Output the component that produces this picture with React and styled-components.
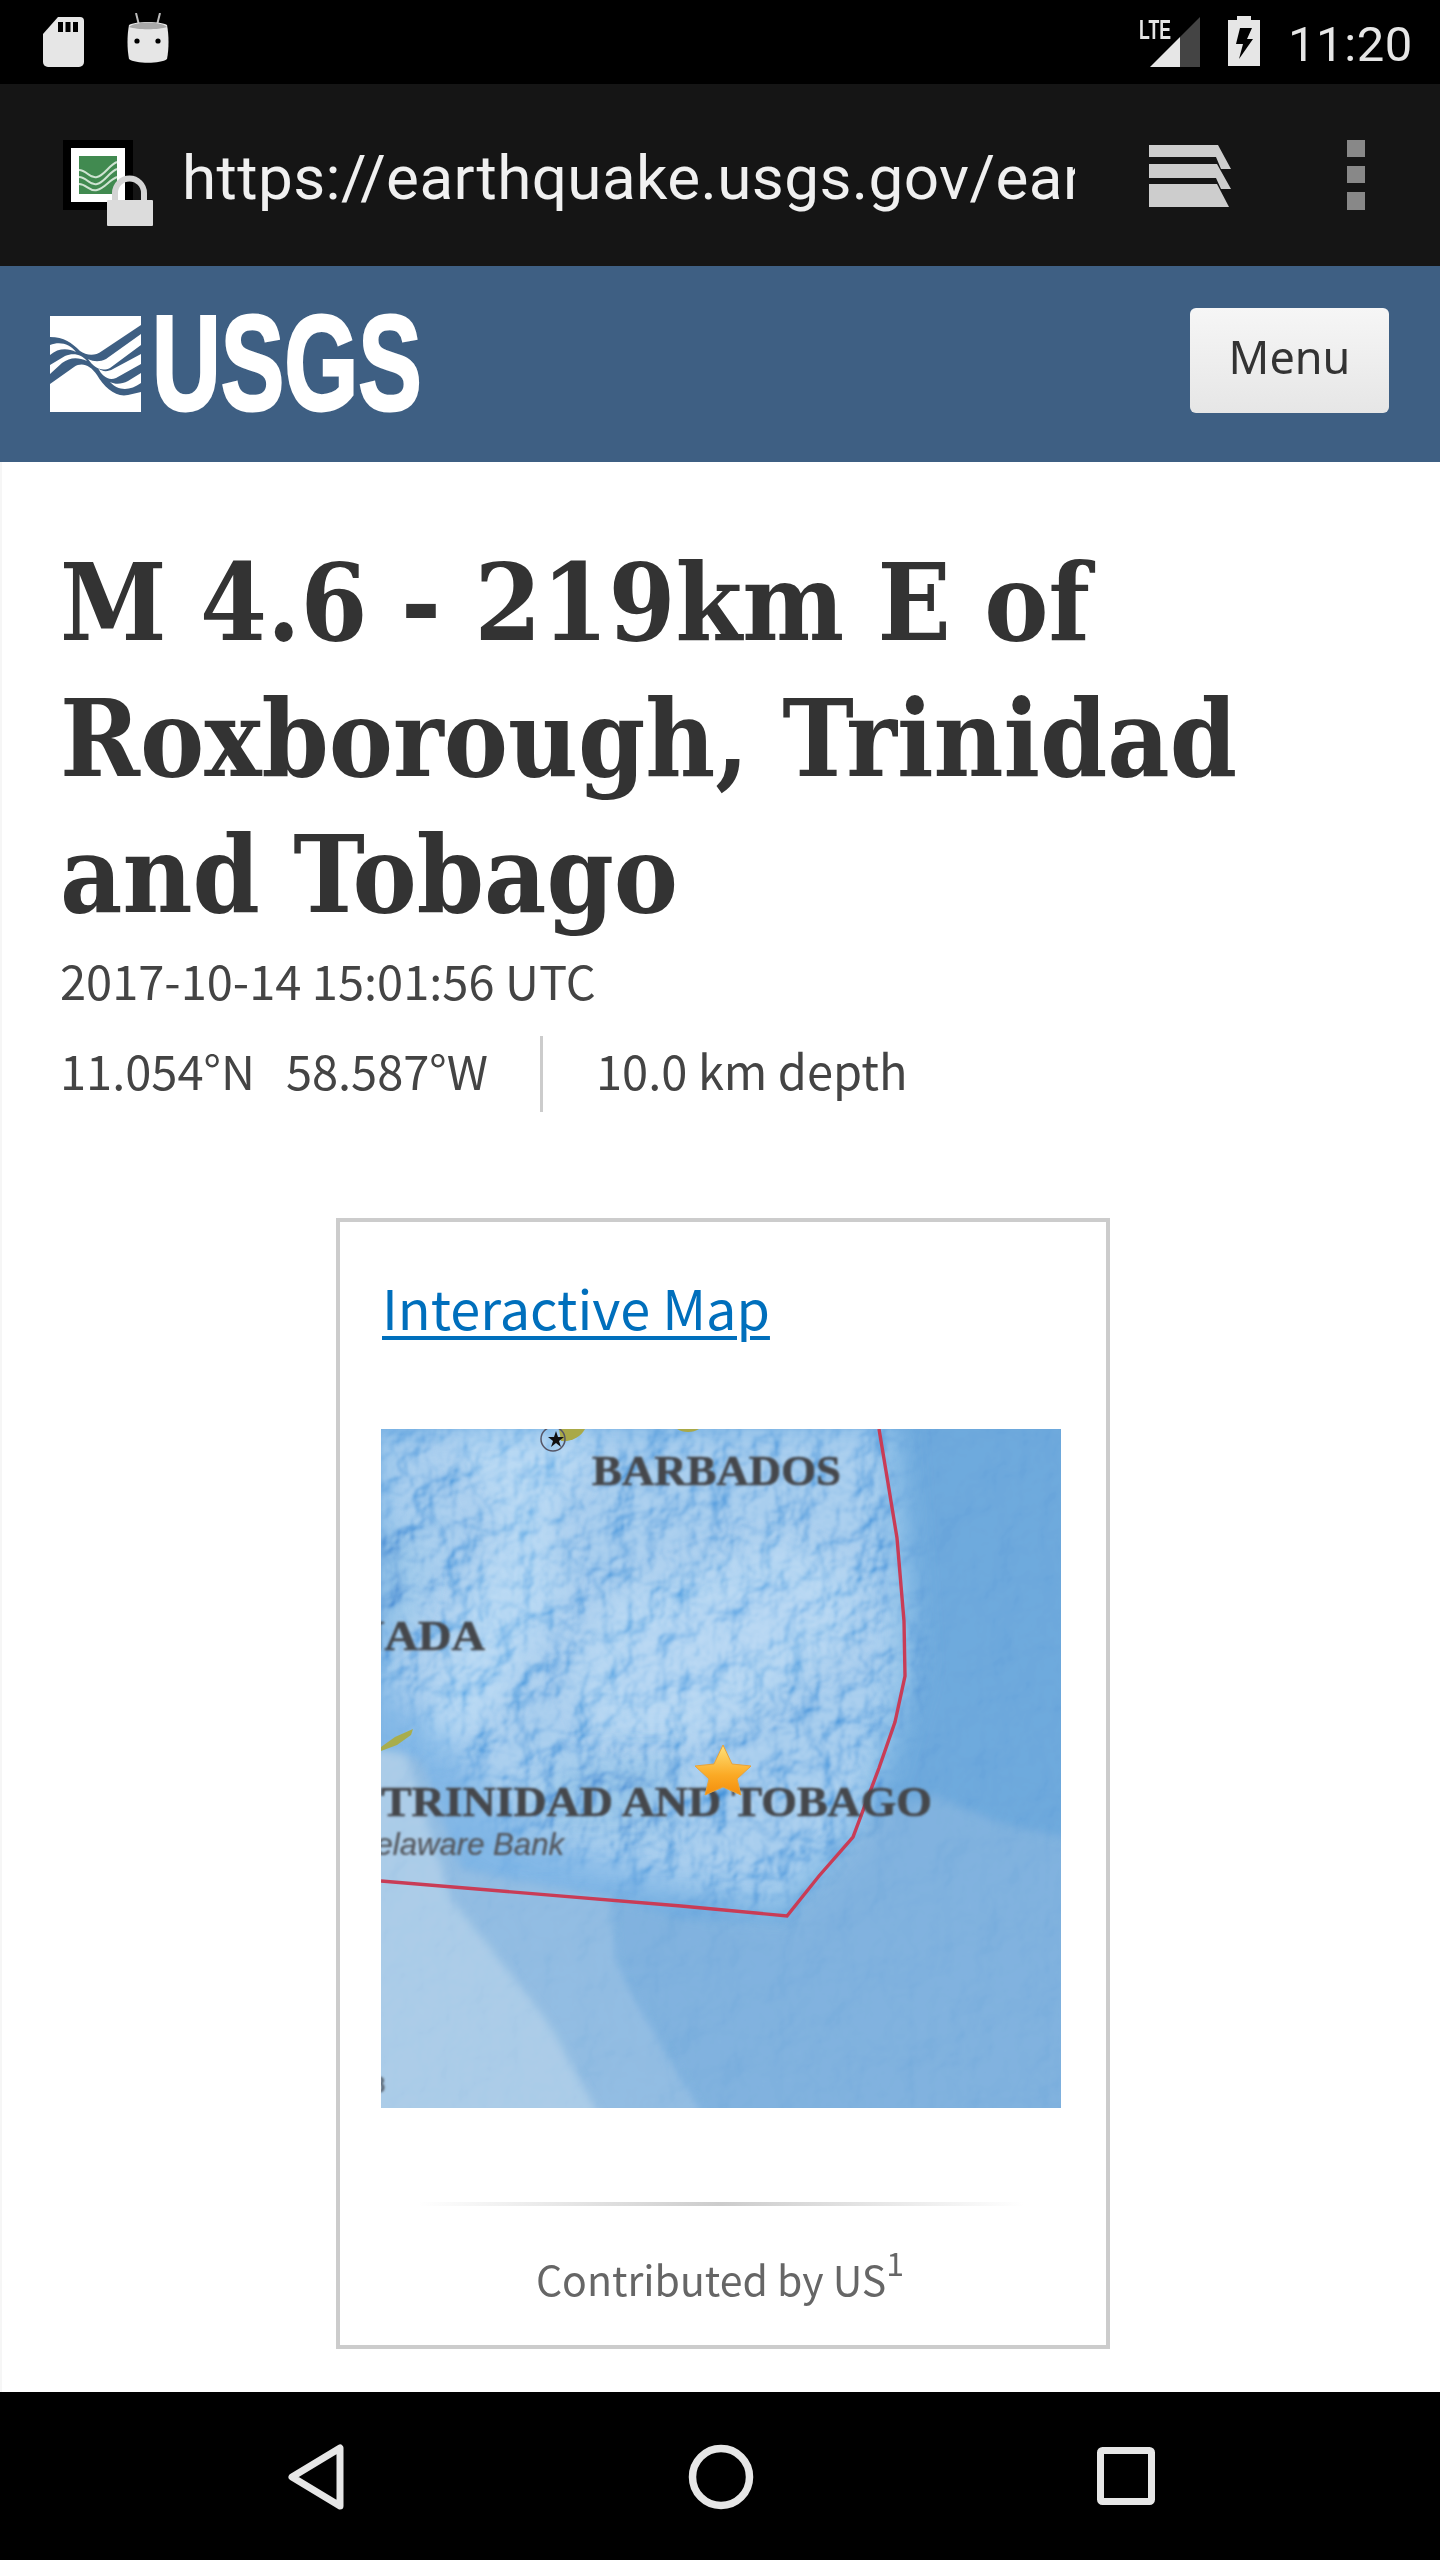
import React from 'react'
import styled, { createGlobalStyle } from 'styled-components'

const GlobalStyle = createGlobalStyle`
  html, body { margin: 0; padding: 0; background: #000; }
  * { box-sizing: border-box; }
`

const Phone = styled.div`
  width: 1440px;
  height: 2560px;
  display: flex;
  flex-direction: column;
  overflow: hidden;
  background: #000;
`

const StatusBar = styled.div`
  height: 84px;
  flex: none;
  background: #000;
  display: flex;
  align-items: flex-start;
  padding: 14px 27px 0 43px;
`
const StatusLeft = styled.div`
  display: flex;
  align-items: flex-start;
  gap: 43px;
  padding-top: 3px;
`
const StatusRight = styled.div`
  margin-left: auto;
  display: flex;
  align-items: flex-start;
`
const SignalIcon = styled.svg`
  display: block;
  margin-top: 3px;
`
const BatteryIcon = styled.svg`
  display: block;
  margin: 2px 28px 0 28px;
`
const Clock = styled.span`
  margin-top: 3px;
  font-family: Roboto, sans-serif;
  font-size: 49px;
  line-height: 56px;
  color: #e6e6e6;
  letter-spacing: 0.6px;
`

const Toolbar = styled.div`
  height: 182px;
  flex: none;
  background: #151515;
  display: flex;
  align-items: flex-start;
  padding: 56px 0 0 63px;
`
const UrlText = styled.div`
  width: 893px;
  margin: 6px 0 0 28px;
  height: 72px;
  overflow: hidden;
  white-space: nowrap;
  font-family: Roboto, sans-serif;
  font-size: 62px;
  line-height: 64px;
  letter-spacing: 0.4px;
  color: #f0f0f0;
`
const TabsIcon = styled.svg`
  display: block;
  margin: 5px 0 0 74px;
`
const MoreIcon = styled.svg`
  display: block;
  margin-left: 116px;
`

const SiteHeader = styled.header`
  height: 196px;
  flex: none;
  background: #3e5f83;
  display: flex;
  align-items: flex-start;
  padding: 42px 51px 0 50px;
`
const WaveMark = styled.svg`
  display: block;
  flex: none;
  margin-top: 8px;
`
const Wordmark = styled.span`
  width: 262px;
  margin: 1px 0 0 11px;
  display: block;
  font-family: "Liberation Sans", Arial, sans-serif;
  font-weight: 700;
  font-size: 136px;
  line-height: 108px;
  color: #fff;
  white-space: nowrap;
  transform: scaleX(0.7);
  transform-origin: 0 50%;
  -webkit-text-stroke: 3px #fff;
`
const MenuButton = styled.button`
  margin-left: auto;
  width: 199px;
  height: 105px;
  border: 0;
  border-radius: 6px;
  background: linear-gradient(#f6f6f6, #e6e6e6);
  font-family: "Noto Sans", sans-serif;
  font-size: 45px;
  color: #333;
  padding: 0 0 8px;
`

const Main = styled.main`
  flex: 1;
  min-height: 0;
  background: #fff;
  padding: 0 0 0 60px;
  border-left: 2px solid #f6f6f6;
  overflow: hidden;
`
const Title = styled.h1`
  margin: 73px 0 0 -2px;
  width: 1260px;
  font-family: "DejaVu Serif Condensed", "DejaVu Serif", serif;
  font-weight: 700;
  font-size: 107px;
  line-height: 136px;
  color: #333;
`
const MetaLine = styled.div`
  margin: 5px 0 0 -2px;
  font-family: "Noto Sans CJK SC", sans-serif;
  font-size: 47px;
  line-height: 64px;
  color: #444;
`
const MetaRow = styled.div`
  margin: 24px 0 0 -2px;
  height: 76px;
  display: flex;
  align-items: flex-start;
  font-family: "Noto Sans CJK SC", sans-serif;
  font-size: 47px;
  line-height: 68px;
  color: #444;
`
const Coord = styled.span`
  margin-right: 31px;
`
const Depth = styled.span`
  margin-left: 21px;
  padding-left: 53px;
  height: 76px;
  border-left: 3px solid #ccc;
`

const Card = styled.section`
  width: 774px;
  height: 1131px;
  margin: 106px 0 0 274px;
  border: 4px solid #ccc;
  padding: 46px 0 0 41px;
`
const MapLink = styled.a`
  display: block;
  height: 161px;
  margin-left: 1px;
  font-family: "Noto Sans CJK SC", sans-serif;
  font-size: 54px;
  line-height: 78px;
  color: #006fbc;
  text-decoration: underline;
  text-decoration-thickness: 4px;
  text-underline-offset: 6px;
`
const MapImage = styled.svg`
  display: block;
`
const Rule = styled.div`
  width: 606px;
  height: 4px;
  margin: 94px 0 0 37px;
  background: linear-gradient(90deg, rgba(204,204,204,0), #ccc 50%, rgba(204,204,204,0));
`
const Credit = styled.div`
  margin: 34px 0 0 -41px;
  width: 760px;
  text-align: center;
  font-family: "Noto Sans CJK SC", sans-serif;
  font-size: 41px;
  line-height: 76px;
  color: #666;
  sup { font-size: 32px; line-height: 0; vertical-align: 20px; }
`

const NavBar = styled.nav`
  height: 168px;
  flex: none;
  background: #000;
  display: flex;
  align-items: flex-start;
  padding: 52px 0 0 288px;
`
const NavIcon = styled.svg`
  display: block;
  margin-left: ${p => p.$gap || 0}px;
  margin-top: ${p => p.$top || 0}px;
`

function SdIcon() {
  return (
    <svg width="41" height="50" viewBox="0 0 41 50" style={{ display: 'block' }}>
      <path fill="#e6e6e6" d="M15 0H37a4 4 0 0 1 4 4V45a5 5 0 0 1-5 5H5a5 5 0 0 1-5-5V17Z" />
      <path fill="#000" d="M15 5h5v10h-5zM22.500 5h5v10h-5zM30 5h5v10h-5z" />
    </svg>
  )
}

function AndroidIcon() {
  return (
    <svg width="42" height="50" viewBox="0 0 42 50" style={{ display: 'block', marginTop: -4 }}>
      <path stroke="#bbb" strokeWidth="2" d="M9 0l3 12M33 0l-3 12" />
      <path fill="#e6e6e6" d="M2 12C8 8 34 8 40 12c2 10 2 24 0 34-6 5-32 5-38 0C0 36 0 22 2 12Z" />
      <path fill="#a8a8a8" d="M2 14C8 8 34 8 40 14c-8 3-30 3-38 0Z" />
      <circle cx="10" cy="28" r="2.600" fill="#000" />
      <circle cx="31" cy="28" r="2.600" fill="#000" />
    </svg>
  )
}

function Signal() {
  return (
    <SignalIcon width="61" height="50" viewBox="0 0 61 50">
      <polygon fill="#e6e6e6" points="11,50 41,20 41,50" />
      <polygon fill="#444" points="41,20 61,0 61,50 41,50" />
      <text x="0" y="22" fontFamily="Liberation Sans, sans-serif" fontWeight="700" fontSize="28" fill="#e6e6e6" textLength="32" lengthAdjust="spacingAndGlyphs">LTE</text>
    </SignalIcon>
  )
}

function Battery() {
  return (
    <BatteryIcon width="32" height="50" viewBox="0 0 32 50">
      <path fill="#e6e6e6" d="M9 0h14v4h9v46H0V4h9Z" />
      <path fill="#000" d="M12 12h12l-5 11h6L11 43l4-15H8Z" />
    </BatteryIcon>
  )
}

function Favicon() {
  return (
    <svg width="91" height="86" viewBox="0 0 91 86" style={{ display: 'block', flex: 'none' }}>
      <rect width="70" height="70" fill="#000" />
      <rect x="8" y="8" width="54" height="54" fill="#fff" />
      <rect x="16" y="16" width="38" height="38" fill="#418a50" />
      <path fill="none" stroke="#cfe3d2" strokeWidth="2" d="M16 30c8 0 10 9 18 7s12-12 20-15M16 37c8 0 10 9 18 7s12-12 20-15M16 44c8 0 10 8 18 6s12-10 20-13" />
      <path fill="none" stroke="#d4d4d4" strokeWidth="6" d="M52 62V53a14.500 14.500 0 0 1 29 0V62" />
      <rect x="44" y="60" width="46" height="26" rx="1" fill="#dcdcdc" />
    </svg>
  )
}

function WaveLogo() {
  return (
    <WaveMark width="91" height="96" viewBox="0 0 91 96">
      <path fill="#fff" d="M0 0H91V9L52 35C44 41 36 39 30 35C22 27 14 21 0 21Z" />
      <path fill="#fff" d="M0 29C10 25 20 28 26 36C18 32 8 32 0 39Z" />
      <path fill="#fff" d="M0 49L15 40C24 36 32 39 37 45C28 41 20 41 12 47L0 58Z" />
      <path fill="#fff" d="M38 43C44 46 50 46 56 43L91 18V29L60 52C52 56 44 52 38 43Z" />
      <path fill="#fff" d="M48 52C52 56 58 56 63 53L91 38V48L66 62C58 65 52 60 48 52Z" />
      <path fill="#fff" d="M60 66C66 69 72 68 78 65L91 57V67C80 75 68 75 60 66Z" />
      <path fill="#fff" d="M0 68L24 51C32 46 40 49 47 59C54 71 66 82 78 79L91 76V96H0Z" />
    </WaveMark>
  )
}

function MapPicture() {
  return (
    <MapImage width="680" height="679" viewBox="0 0 680 679">
      <defs>
        <filter id="relief" x="0" y="0" width="100%" height="100%">
          <feTurbulence type="fractalNoise" baseFrequency="0.024" numOctaves="5" seed="23" result="n" />
          <feDiffuseLighting in="n" surfaceScale="17" lightingColor="#fff" diffuseConstant="0.500">
            <feDistantLight azimuth="215" elevation="58" />
          </feDiffuseLighting>
          <feGaussianBlur stdDeviation="1.400" />
        </filter>
        <filter id="soft"><feGaussianBlur stdDeviation="16" /></filter>
        <filter id="softer"><feGaussianBlur stdDeviation="4" /></filter>
        <filter id="labelBlur"><feGaussianBlur stdDeviation="0.800" /></filter>
        <linearGradient id="star" x1="0" y1="0" x2="0" y2="1">
          <stop offset="0" stopColor="#ffe27a" />
          <stop offset="0.6" stopColor="#fbaa25" />
          <stop offset="1" stopColor="#f48e0c" />
        </linearGradient>
        <mask id="ridgeMask">
          <rect width="680" height="679" fill="#181818" />
          <path fill="#fff" filter="url(#soft)" d="M0 0H510L530 240L480 400L400 480L240 440L130 400L60 300L0 260Z" />
        </mask>
      </defs>
      <rect width="680" height="679" fill="#6ba7dc" />
      <path fill="#7eb5e6" filter="url(#soft)" d="M-20 -20H510L528 240L480 400L400 480L120 470L-20 400Z" />
      <path fill="#9fcdf2" opacity="0.7" filter="url(#soft)" d="M70 0H220L170 90L180 170L110 290L40 330L70 200L120 100Z" />
      <path fill="#9ccaf0" opacity="0.7" filter="url(#soft)" d="M230 170L400 110L480 150L470 210L320 310L220 310L190 250Z" />
      <path fill="#6aa3da" opacity="0.6" filter="url(#soft)" d="M-20 90L40 110L30 190L-20 230ZM170 340L290 330L290 400L150 400Z" />
      <path fill="#7db0de" filter="url(#softer)" d="M700 412L620 395L554 367L500 380L445 450L406 495L300 490L232 470L236 530L256 572L332 700H700Z" />
      <path fill="#8fbbe2" filter="url(#softer)" d="M-20 320L40 330L80 440L232 470L236 530L256 572L332 700H-20Z" />
      <path fill="#a9cbe8" filter="url(#softer)" d="M-20 320L25 325L70 470L110 520L165 590L226 700H-20Z" />
      <rect width="680" height="679" filter="url(#relief)" mask="url(#ridgeMask)" style={{ mixBlendMode: 'overlay' }} opacity="0.8" />
      <polygon fill="#a8ad4c" points="0,318 14,308 32,300 30,306 16,316 0,322" />
      <path fill="#a9a948" d="M178 0H204C200 8 190 13 180 12Z" />
      <path fill="#a9a948" d="M296 0H318C312 4 302 4 296 0Z" />
      <circle cx="172" cy="10" r="12" fill="none" stroke="#556" strokeWidth="1.500" />
      <polygon fill="#111" points="175,2 177,8 183,8 178,12 180,18 175,14 170,18 172,12 167,8 173,8" />
      <polyline fill="none" stroke="#c93c56" strokeWidth="3.400" points="498,0 507,54 516,109 523,192 524,247 514,293 498,339 472,408 438,447 406,487 300,477 0,452" />
      <g filter="url(#labelBlur)" fill="#45474c" stroke="#45474c" strokeWidth="0.600" fontFamily="Liberation Serif, serif" fontWeight="700">
        <text x="211" y="56" fontSize="42" textLength="249" lengthAdjust="spacingAndGlyphs">BARBADOS</text>
        <text x="-30" y="221" fontSize="42" textLength="134" lengthAdjust="spacingAndGlyphs">NADA</text>
        <text x="0" y="387" fontSize="42" textLength="551" lengthAdjust="spacingAndGlyphs">TRINIDAD AND TOBAGO</text>
        <text x="-28" y="426" fontSize="32" fontStyle="italic" fontWeight="400" fontFamily="Liberation Sans, sans-serif" strokeWidth="0.200" fill="#55585e" textLength="211" lengthAdjust="spacingAndGlyphs">Delaware Bank</text>
        <text x="-8" y="663" fontSize="24" fontWeight="400" fill="#55606e">8</text>
      </g>
      <polygon fill="url(#star)" stroke="#e9a33a" strokeWidth="1" points="342,316 351,335 370,337 356,350 360,366 342,358 324,366 328,350 314,337 333,335" />
    </MapImage>
  )
}

export default function App() {
  return (
    <Phone>
      <GlobalStyle />
      <StatusBar>
        <StatusLeft>
          <SdIcon />
          <AndroidIcon />
        </StatusLeft>
        <StatusRight>
          <Signal />
          <Battery />
          <Clock>11:20</Clock>
        </StatusRight>
      </StatusBar>
      <Toolbar>
        <Favicon />
        <UrlText>https://earthquake.usgs.gov/earthquakes/eventpage</UrlText>
        <TabsIcon width="82" height="62" viewBox="0 0 82 62">
          <path fill="#cdcdcd" d="M0 0H69L82 24H72L67 12H0Z" />
          <path fill="#cdcdcd" d="M0 19H68L82 44H72L67 33H0Z" />
          <path fill="#cdcdcd" d="M0 39H68L80 62H0Z" />
        </TabsIcon>
        <MoreIcon width="18" height="70" viewBox="0 0 18 70">
          <path fill="#888" d="M0 0h18v17H0zM0 26h18v17H0zM0 52h18v18H0z" />
        </MoreIcon>
      </Toolbar>
      <SiteHeader>
        <WaveLogo />
        <Wordmark>USGS</Wordmark>
        <MenuButton>Menu</MenuButton>
      </SiteHeader>
      <Main>
        <Title>M 4.6 - 219km E of Roxborough, Trinidad and Tobago</Title>
        <MetaLine>2017-10-14 15:01:56 UTC</MetaLine>
        <MetaRow>
          <Coord>11.054°N</Coord>
          <Coord>58.587°W</Coord>
          <Depth>10.0 km depth</Depth>
        </MetaRow>
        <Card>
          <MapLink href="#map">Interactive Map</MapLink>
          <MapPicture />
          <Rule />
          <Credit>Contributed by US<sup>1</sup></Credit>
        </Card>
      </Main>
      <NavBar>
        <NavIcon width="56" height="66" viewBox="0 0 56 66">
          <path fill="none" stroke="#e6e6e6" strokeWidth="7" strokeLinejoin="round" d="M52 4V62L4 33Z" />
        </NavIcon>
        <NavIcon $gap={344} width="66" height="66" viewBox="0 0 66 66">
          <circle cx="33" cy="33" r="28.500" fill="none" stroke="#e6e6e6" strokeWidth="7.500" />
        </NavIcon>
        <NavIcon $gap={343} $top={3} width="58" height="58" viewBox="0 0 58 58">
          <rect x="3.500" y="3.500" width="51" height="51" rx="2" fill="none" stroke="#e6e6e6" strokeWidth="7" />
        </NavIcon>
      </NavBar>
    </Phone>
  )
}
